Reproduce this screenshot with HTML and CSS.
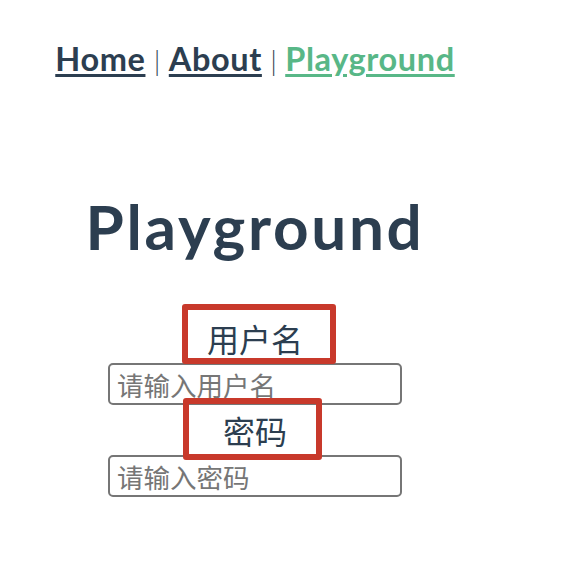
FILE: index.html
```html
<!DOCTYPE html>
<html lang="zh">
<head>
<meta charset="utf-8">
<title>Playground</title>
<link rel="stylesheet" href="styles.css">
</head>
<body>
<div class="app">
  <nav class="nav">
    <a class="nav-link" href="#">Home</a> <span class="sep">|</span>
    <a class="nav-link" href="#">About</a> <span class="sep">|</span>
    <a class="nav-link active" href="#">Playground</a>
  </nav>
  <main class="page">
    <h1 class="title">Playground</h1>
    <form class="form">
      <div class="label-row"><label class="label" for="user">用户名<span class="mark mark-user"></span></label></div>
      <input class="field" id="user" type="text" placeholder="请输入用户名">
      <div class="label-row"><label class="label" for="pwd">密码<span class="mark mark-pwd"></span></label></div>
      <input class="field" id="pwd" type="password" placeholder="请输入密码">
    </form>
  </main>
</div>
</body>
</html>
```

FILE: styles.css
```css
html, body {
  margin: 0;
  padding: 0;
  background: #ffffff;
}

.app {
  width: 510px;
  text-align: center;
  color: #2c3e50;
  font-family: Lato, "Noto Sans", "Noto Sans CJK SC", sans-serif;
}

.nav {
  padding: 40px 0 0;
  font-size: 32.5px;
  line-height: 38px;
  height: 38px;
}

.nav-link {
  color: #2c3e50;
  font-weight: 700;
  letter-spacing: 0.6px;
  text-decoration: underline;
  text-decoration-thickness: 3px;
  text-underline-offset: 3px;
}

.nav-link.active {
  color: #58b787;
}

.sep {
  font-weight: 300;
  font-size: 28px;
  color: #2c3e50;
}

.page {
  padding-top: 112px;
}

.title {
  margin: 0 0 51px;
  font-size: 62px;
  line-height: 72px;
  font-weight: 700;
  letter-spacing: 2.7px;
}

.form {
  margin: 0;
}

.label-row {
  height: 50px;
  line-height: 50px;
}

.label {
  position: relative;
  display: inline-block;
  font-family: "Noto Sans CJK SC", sans-serif;
  font-size: 32px;
  line-height: 50px;
  color: #2c3e50;
}

.mark {
  position: absolute;
  box-sizing: border-box;
  border: 6px solid #c8392b;
  border-radius: 3px;
  pointer-events: none;
}

.mark-user {
  left: -25px;
  top: -9px;
  width: 154px;
  height: 60px;
}

.mark-pwd {
  left: -40px;
  top: -7px;
  width: 139px;
  height: 62px;
}

.field {
  display: block;
  box-sizing: border-box;
  width: 294px;
  height: 42px;
  margin: 0 auto;
  padding: 0 7px;
  border: 2px solid #767676;
  border-radius: 5px;
  background: #ffffff;
  font-family: "Noto Sans CJK SC", sans-serif;
  font-size: 26.5px;
  color: #2c3e50;
}

.field::placeholder {
  color: #767676;
}
```
